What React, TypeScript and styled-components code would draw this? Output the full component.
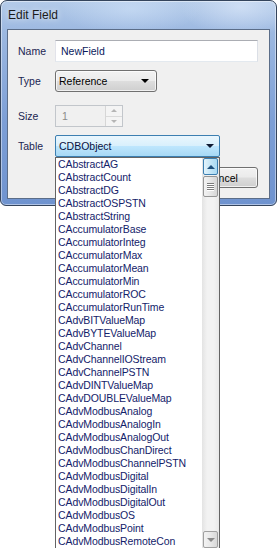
import styled, { createGlobalStyle } from "styled-components";

const GlobalStyle = createGlobalStyle`
    html, body {
        margin: 0;
        padding: 0;
        background: #ffffff;
    }
    body {
        font-family: "Liberation Sans", Arial, sans-serif;
        font-size: 10.5px;
        overflow: hidden;
    }
`;

const Page = styled.div`
    width: 277px;
    height: 548px;
    position: relative;
`;

const Window = styled.div`
    width: 277px;
    box-sizing: border-box;
    border: 1px solid #34445c;
    border-radius: 7px 7px 6px 6px;
    padding: 0 6px 6px 6px;
    background:
        radial-gradient(ellipse 70px 26px at 130px 8px, rgba(210, 228, 250, 0.55), rgba(210, 228, 250, 0) 100%),
        radial-gradient(ellipse 60px 30px at 240px 6px, rgba(225, 236, 252, 0.6), rgba(225, 236, 252, 0) 100%),
        linear-gradient(to bottom, #b4cbe9 0px, #9db9e1 30px, #7d9fd6 120px, #6f93cf 205px);
    box-shadow: inset 0 0 0 1px rgba(255, 255, 255, 0.45);
`;

const TitleBar = styled.div`
    height: 28px;
    display: flex;
    align-items: center;
    padding-left: 1px;
`;

const Title = styled.span`
    font-size: 12px;
    color: #1b1b1b;
    text-shadow: 0 0 6px rgba(255, 255, 255, 0.9);
`;

const Client = styled.div`
    background: #f0f0f0;
    border: 1px solid #5b6d88;
    padding: 10px 11px 10px 10px;
    display: flex;
    flex-direction: column;
`;

const Row = styled.div<{ $gap: number }>`
    display: flex;
    align-items: center;
    height: 22px;
    margin-top: ${p => p.$gap}px;
`;

const Label = styled.div`
    width: 37px;
    color: #1a2552;
`;

const TextInput = styled.div`
    box-sizing: border-box;
    width: 203px;
    height: 22px;
    background: #ffffff;
    border: 1px solid #abadb3;
    border-left-color: #e2e3ea;
    border-right-color: #dbdfe6;
    border-bottom-color: #e3e9ef;
    display: flex;
    align-items: center;
    padding-left: 5px;
    color: #0a1a5c;
`;

const SelectBox = styled.div`
    box-sizing: border-box;
    width: 102px;
    height: 22px;
    border: 1px solid #707070;
    border-radius: 3px;
    background: linear-gradient(to bottom, #f2f2f2 0%, #ebebeb 48%, #dddddd 52%, #cfcfcf 100%);
    box-shadow: inset 0 0 0 1px rgba(255, 255, 255, 0.7);
    display: flex;
    align-items: center;
    justify-content: space-between;
    padding: 0 4px 0 3px;
    color: #000000;
`;

const Arrow = styled.span<{ $color?: string }>`
    width: 0;
    height: 0;
    border-left: 4px solid transparent;
    border-right: 4px solid transparent;
    border-top: 4px solid ${p => p.$color || "#000"};
    margin-right: 3px;
`;

const SpinBox = styled.div`
    box-sizing: border-box;
    width: 68px;
    height: 22px;
    border: 1px solid #c2c6cb;
    background: #f0f0f0;
    display: flex;
    align-items: stretch;
`;

const SpinValue = styled.div`
    flex: 1;
    display: flex;
    align-items: center;
    padding-left: 6px;
    color: #8a8a8a;
`;

const SpinButtons = styled.div`
    width: 16px;
    display: flex;
    flex-direction: column;
    border-left: 1px solid #d6d6d6;
`;

const SpinHalf = styled.div<{ $up?: boolean }>`
    flex: 1;
    display: flex;
    align-items: center;
    justify-content: center;
    background: #f4f4f4;
    border-bottom: ${p => (p.$up ? "1px solid #dadada" : "none")};
`;

const TinyArrow = styled.span<{ $up?: boolean }>`
    width: 0;
    height: 0;
    border-left: 3px solid transparent;
    border-right: 3px solid transparent;
    ${p => (p.$up ? "border-bottom: 3px solid #b5b5b5;" : "border-top: 3px solid #b5b5b5;")}
`;

const ComboWrap = styled.div`
    position: relative;
`;

const ComboBox = styled.div`
    box-sizing: border-box;
    width: 165px;
    height: 22px;
    border: 1px solid #3c7fb1;
    border-radius: 2px;
    background: linear-gradient(to bottom, #eaf6fd 0%, #d9f0fc 48%, #bee6fd 52%, #a7d9f5 100%);
    display: flex;
    align-items: center;
    justify-content: space-between;
    padding: 0 2px 0 3px;
    color: #0b1242;
`;

const ButtonRow = styled.div`
    display: flex;
    justify-content: flex-end;
    gap: 6px;
    margin-top: 10px;
`;

const Button = styled.div`
    box-sizing: border-box;
    width: 73px;
    height: 21px;
    border: 1px solid #707070;
    border-radius: 3px;
    background: linear-gradient(to bottom, #f2f2f2 0%, #ebebeb 48%, #dddddd 52%, #cfcfcf 100%);
    box-shadow: inset 0 0 0 1px rgba(255, 255, 255, 0.7);
    display: flex;
    align-items: center;
    justify-content: center;
    color: #000000;
`;

const DropList = styled.div`
    position: absolute;
    top: 22px;
    left: 0;
    width: 165px;
    height: 392px;
    box-sizing: border-box;
    border: 1px solid #646464;
    background: #ffffff;
    display: flex;
    z-index: 5;
`;

const Items = styled.div`
    flex: 1;
    display: flex;
    flex-direction: column;
`;

const Item = styled.div`
    height: 13px;
    line-height: 13px;
    padding-left: 2px;
    letter-spacing: -0.1px;
    color: #13226a;
    white-space: nowrap;
`;

const ScrollBar = styled.div`
    width: 17px;
    display: flex;
    flex-direction: column;
    background: linear-gradient(to right, #e3e3e3, #f2f2f2 30%, #f2f2f2 70%, #e8e8e8);
`;

const ScrollBtn = styled.div<{ $hot?: boolean }>`
    box-sizing: border-box;
    height: 17px;
    margin: 0 1px;
    border: 1px solid ${p => (p.$hot ? "#3c7fb1" : "#a0a0a0")};
    border-radius: 2px;
    background: ${p =>
        p.$hot
            ? "linear-gradient(to right, #e3f4fc, #c4e5f6 50%, #a9daf3)"
            : "linear-gradient(to right, #f3f3f3, #e8e8e8 50%, #d8d8d8)"};
    display: flex;
    align-items: center;
    justify-content: center;
`;

const ScrollArrow = styled.span<{ $up?: boolean; $color: string }>`
    width: 0;
    height: 0;
    border-left: 4px solid transparent;
    border-right: 4px solid transparent;
    ${p => (p.$up ? `border-bottom: 4px solid ${p.$color};` : `border-top: 4px solid ${p.$color};`)}
`;

const Thumb = styled.div`
    box-sizing: border-box;
    height: 21px;
    margin: 1px 1px 0 1px;
    border: 1px solid #959595;
    border-radius: 2px;
    background: linear-gradient(to right, #f3f3f3, #e6e6e6 50%, #d6d6d6);
    display: flex;
    flex-direction: column;
    align-items: center;
    justify-content: center;
    gap: 1px;
`;

const Grip = styled.span`
    width: 7px;
    height: 1px;
    background: #7a7a7a;
    box-shadow: 0 1px 0 #ffffff;
`;

const Track = styled.div`
    flex: 1;
`;

const tables = [
    "CAbstractAG",
    "CAbstractCount",
    "CAbstractDG",
    "CAbstractOSPSTN",
    "CAbstractString",
    "CAccumulatorBase",
    "CAccumulatorInteg",
    "CAccumulatorMax",
    "CAccumulatorMean",
    "CAccumulatorMin",
    "CAccumulatorROC",
    "CAccumulatorRunTime",
    "CAdvBITValueMap",
    "CAdvBYTEValueMap",
    "CAdvChannel",
    "CAdvChannelIOStream",
    "CAdvChannelPSTN",
    "CAdvDINTValueMap",
    "CAdvDOUBLEValueMap",
    "CAdvModbusAnalog",
    "CAdvModbusAnalogIn",
    "CAdvModbusAnalogOut",
    "CAdvModbusChanDirect",
    "CAdvModbusChannelPSTN",
    "CAdvModbusDigital",
    "CAdvModbusDigitalIn",
    "CAdvModbusDigitalOut",
    "CAdvModbusOS",
    "CAdvModbusPoint",
    "CAdvModbusRemoteCon",
];

function App() {
    return (
        <Page>
            <GlobalStyle />
            <Window>
                <TitleBar>
                    <Title>Edit Field</Title>
                </TitleBar>
                <Client>
                    <Row $gap={0}>
                        <Label>Name</Label>
                        <TextInput>NewField</TextInput>
                    </Row>
                    <Row $gap={8}>
                        <Label>Type</Label>
                        <SelectBox>
                            Reference
                            <Arrow />
                        </SelectBox>
                    </Row>
                    <Row $gap={13}>
                        <Label>Size</Label>
                        <SpinBox>
                            <SpinValue>1</SpinValue>
                            <SpinButtons>
                                <SpinHalf $up><TinyArrow $up /></SpinHalf>
                                <SpinHalf><TinyArrow /></SpinHalf>
                            </SpinButtons>
                        </SpinBox>
                    </Row>
                    <Row $gap={8}>
                        <Label>Table</Label>
                        <ComboWrap>
                            <ComboBox>
                                CDBObject
                                <Arrow $color="#0f1a33" />
                            </ComboBox>
                            <DropList>
                                <Items>
                                    {tables.map(t => <Item key={t}>{t}</Item>)}
                                </Items>
                                <ScrollBar>
                                    <ScrollBtn $hot><ScrollArrow $up $color="#1d4f7c" /></ScrollBtn>
                                    <Thumb>
                                        <Grip />
                                        <Grip />
                                        <Grip />
                                        <Grip />
                                    </Thumb>
                                    <Track />
                                    <ScrollBtn><ScrollArrow $color="#8a8a8a" /></ScrollBtn>
                                </ScrollBar>
                            </DropList>
                        </ComboWrap>
                    </Row>
                    <ButtonRow>
                        <Button>OK</Button>
                        <Button>Cancel</Button>
                    </ButtonRow>
                </Client>
            </Window>
        </Page>
    );
}

export default App;
